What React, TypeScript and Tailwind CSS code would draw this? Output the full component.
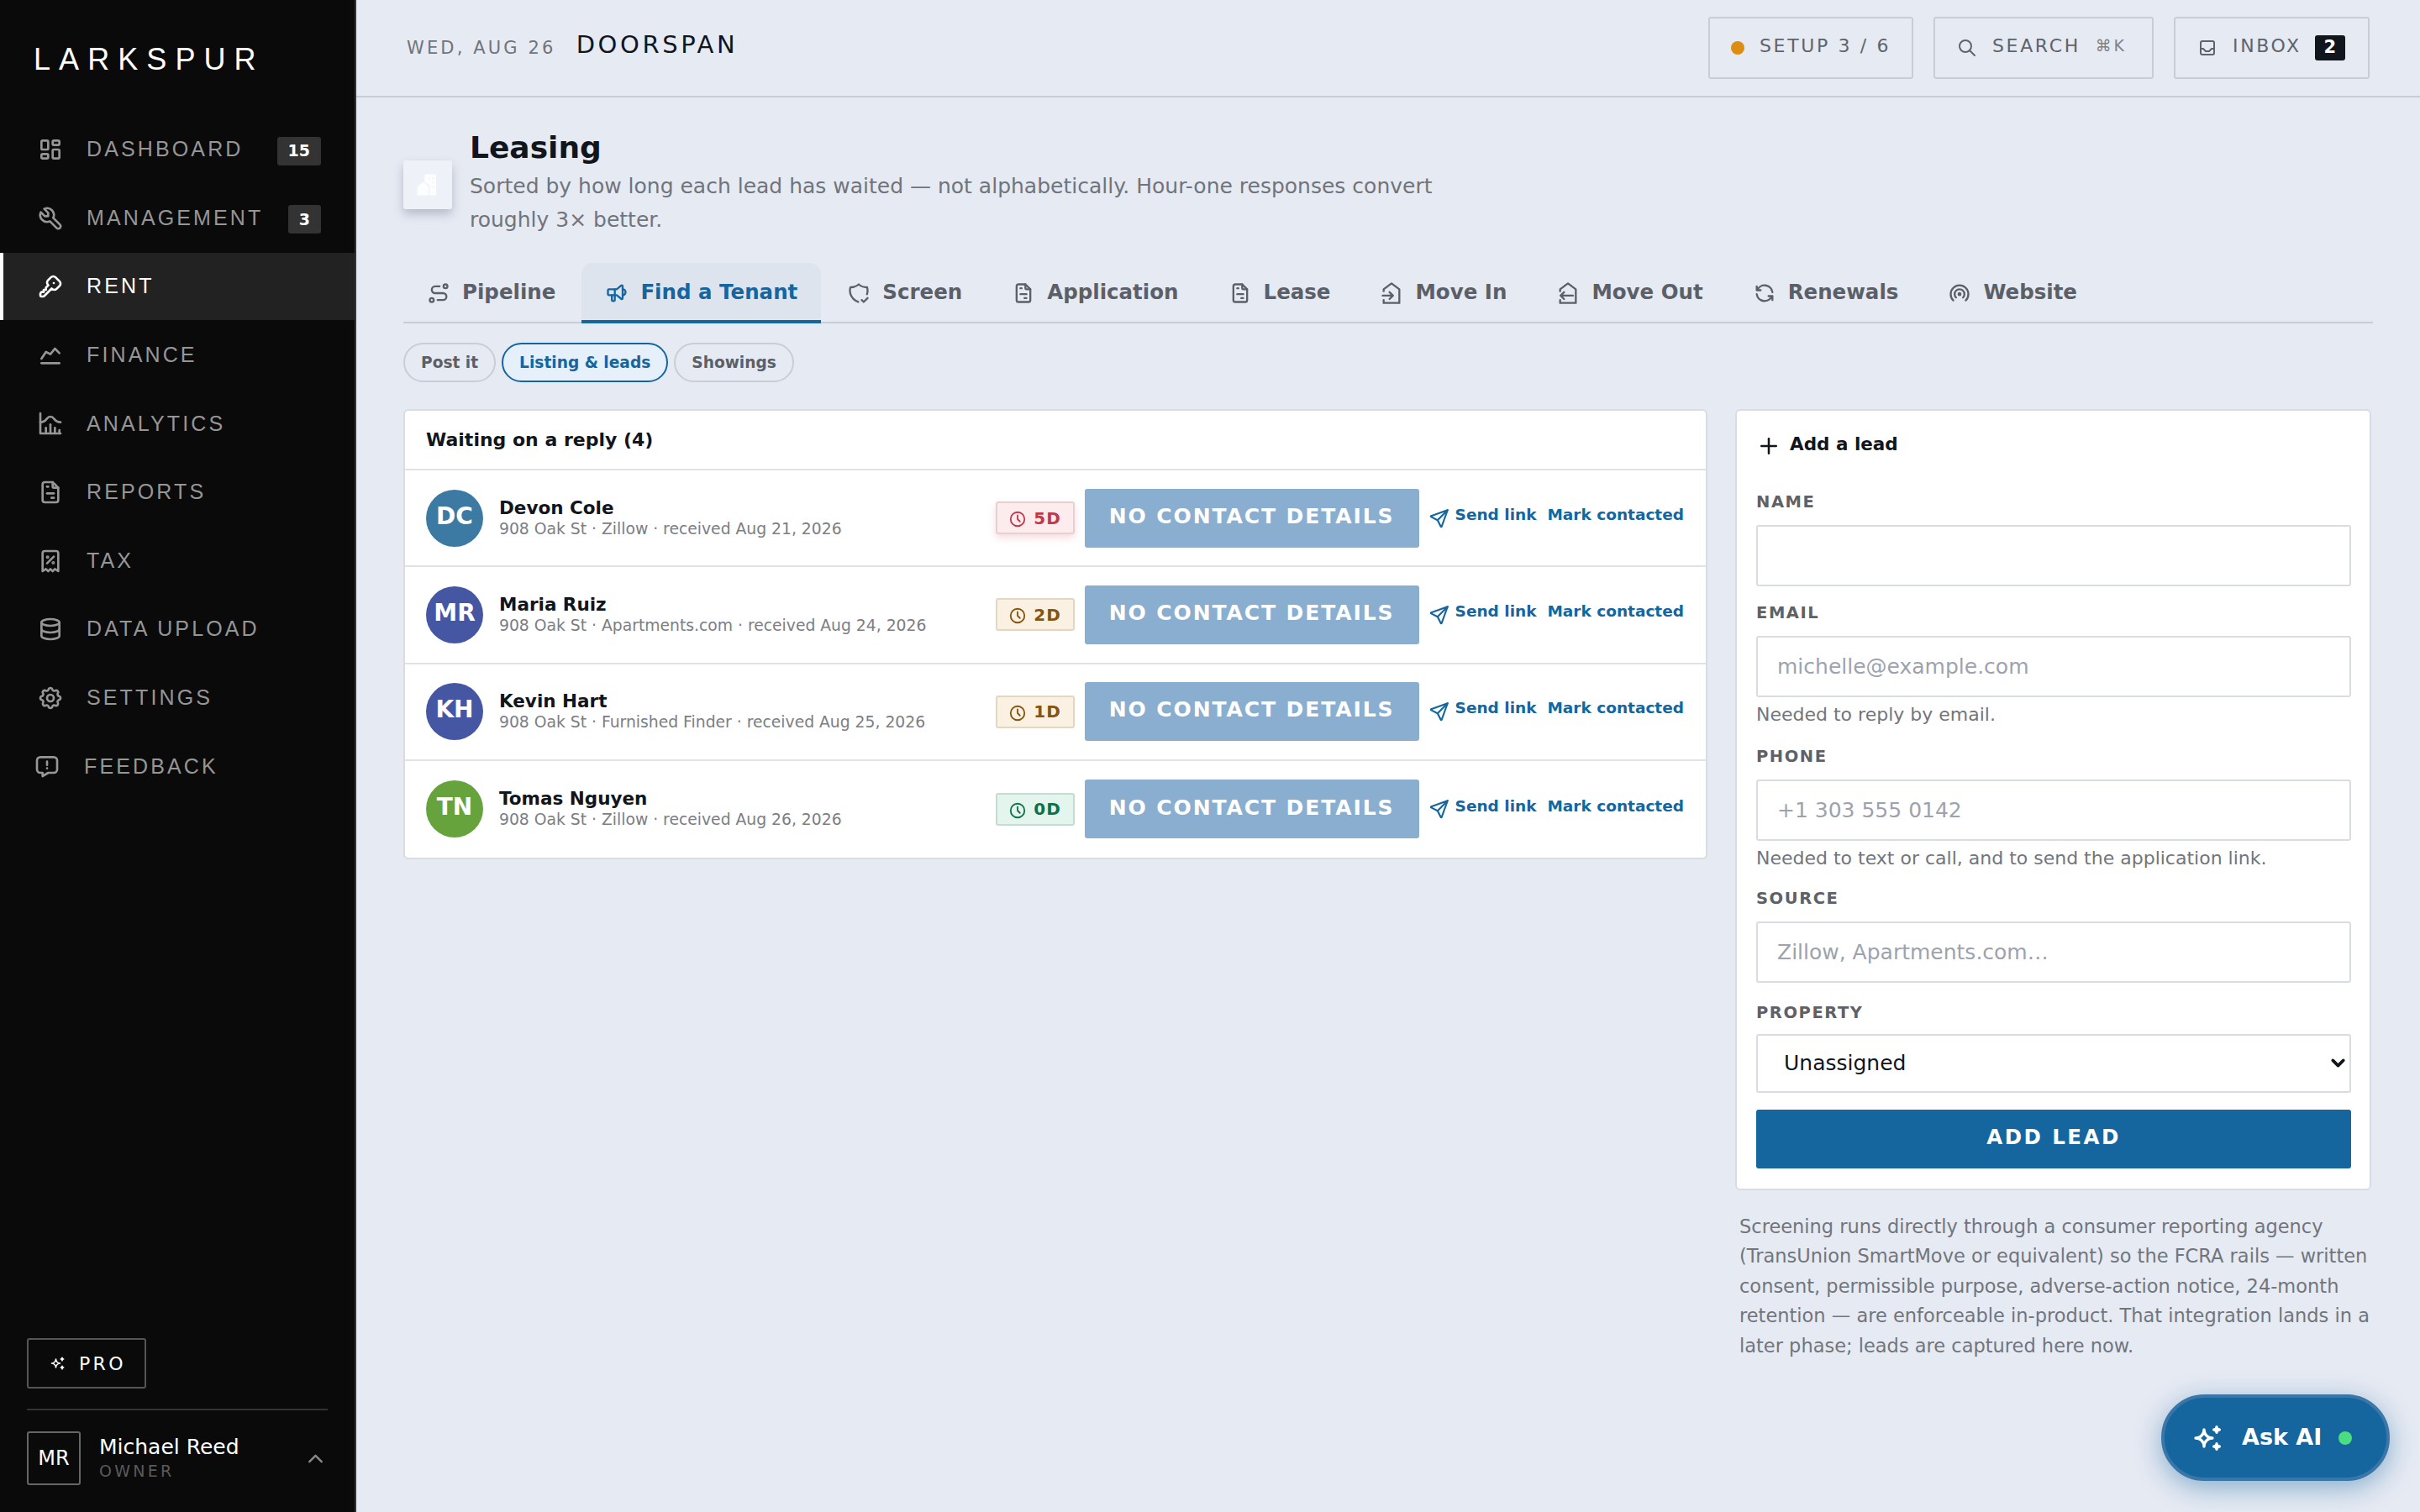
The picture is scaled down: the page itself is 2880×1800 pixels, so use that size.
import type { ReactNode } from "react";
import {
  TbBroadcast,
  TbChartHistogram,
  TbChartLine,
  TbChevronDown,
  TbChevronUp,
  TbClock,
  TbDatabase,
  TbFileInvoice,
  TbInbox,
  TbKey,
  TbLayoutDashboard,
  TbMessageReport,
  TbPlus,
  TbReceiptTax,
  TbRefresh,
  TbRoute,
  TbSearch,
  TbSend,
  TbSettings,
  TbShieldCheck,
  TbSparkles,
  TbSpeakerphone,
  TbTool,
} from "react-icons/tb";

function Svg({ className, children }: { className?: string; children: ReactNode }) {
  return (
    <svg
      viewBox="0 0 24 24"
      fill="none"
      stroke="currentColor"
      strokeWidth="2"
      strokeLinecap="round"
      strokeLinejoin="round"
      className={className}
    >
      {children}
    </svg>
  );
}

const MoveInIcon = ({ className }: { className?: string }) => (
  <Svg className={className}>
    <path d="M4 10V8l8-6 8 6v14H4v-3" />
    <path d="M3 14.5h10M10 11l3.5 3.5L10 18" />
  </Svg>
);

const MoveOutIcon = ({ className }: { className?: string }) => (
  <Svg className={className}>
    <path d="M4 10V8l8-6 8 6v14H4v-3" />
    <path d="M17 14.5H5M8 11l-3.5 3.5L8 18" />
  </Svg>
);

const nav = [
  { label: "DASHBOARD", icon: TbLayoutDashboard, badge: "15" },
  { label: "MANAGEMENT", icon: TbTool, badge: "3" },
  { label: "RENT", icon: TbKey, active: true },
  { label: "FINANCE", icon: TbChartLine },
  { label: "ANALYTICS", icon: TbChartHistogram },
  { label: "REPORTS", icon: TbFileInvoice },
  { label: "TAX", icon: TbReceiptTax },
  { label: "DATA UPLOAD", icon: TbDatabase },
  { label: "SETTINGS", icon: TbSettings },
];

const tabs = [
  { label: "Pipeline", icon: TbRoute },
  { label: "Find a Tenant", icon: TbSpeakerphone, active: true },
  { label: "Screen", icon: TbShieldCheck },
  { label: "Application", icon: TbFileInvoice },
  { label: "Lease", icon: TbFileInvoice },
  { label: "Move In", icon: MoveInIcon },
  { label: "Move Out", icon: MoveOutIcon },
  { label: "Renewals", icon: TbRefresh },
  { label: "Website", icon: TbBroadcast },
];

const leads = [
  {
    initials: "DC",
    name: "Devon Cole",
    meta: "908 Oak St · Zillow · received Aug 21, 2026",
    age: "5D",
    avatar: "bg-[#3d7aa3]",
    badge: "bg-[#fdecee] border-[#e8cfd2] text-[#c0394b] shadow-[0_4px_10px_rgba(192,57,75,0.18)]",
  },
  {
    initials: "MR",
    name: "Maria Ruiz",
    meta: "908 Oak St · Apartments.com · received Aug 24, 2026",
    age: "2D",
    avatar: "bg-[#4556a3]",
    badge: "bg-[#fbf1e2] border-[#e3d6c2] text-[#85540f]",
  },
  {
    initials: "KH",
    name: "Kevin Hart",
    meta: "908 Oak St · Furnished Finder · received Aug 25, 2026",
    age: "1D",
    avatar: "bg-[#4556a3]",
    badge: "bg-[#fbf1e2] border-[#e3d6c2] text-[#85540f]",
  },
  {
    initials: "TN",
    name: "Tomas Nguyen",
    meta: "908 Oak St · Zillow · received Aug 26, 2026",
    age: "0D",
    avatar: "bg-[#66a33d]",
    badge: "bg-[#e4f5ee] border-[#c4dcd1] text-[#0f7148]",
  },
];

function Field({ label, placeholder, hint, hintClass }: { label: string; placeholder?: string; hint?: string; hintClass?: string }) {
  return (
    <div className="flex flex-col">
      <label className="mb-[15px] h-[24px] text-[19.5px] leading-[24px] font-bold tracking-[0.08em] text-[#5f6167]">{label}</label>
      <input
        placeholder={placeholder}
        className="h-[73px] w-full rounded-[3px] border-2 border-[#d9dce3] bg-white px-[23px] text-[25px] placeholder:text-[#9ca3af]"
      />
      {hint && <p className={`mt-[7px] h-[28px] text-[22px] leading-[28px] text-[#71757c] ${hintClass}`}>{hint}</p>}
    </div>
  );
}

export default function App() {
  return (
    <div className="relative flex h-[1800px] w-[2880px] overflow-hidden bg-[#e6eaf3] font-['DejaVu_Sans',sans-serif] text-[#11151c]">
      <aside className="flex w-[424px] shrink-0 flex-col border-r-2 border-[#333] bg-[#0a0a0a]">
        <div className="flex h-[138px] items-start pl-[40px] pt-[49px] font-['Liberation_Sans',sans-serif] text-[36px] leading-[44px] tracking-[0.28em] text-white">
          LARKSPUR
        </div>
        <nav className="flex flex-col gap-[1.6px]">
          {nav.map((item) => (
            <div
              key={item.label}
              className={`flex h-[80px] items-center gap-[27px] border-l-4 pl-[40px] pr-[40px] ${
                item.active ? "border-white bg-[#222] text-white" : "border-transparent text-[#969696]"
              }`}
            >
              <item.icon className="h-[32px] w-[32px] shrink-0" />
              <span className="font-['Liberation_Sans',sans-serif] text-[25px] tracking-[0.125em]">{item.label}</span>
              {item.badge && (
                <span className="ml-auto mt-[3px] flex h-[34px] items-center rounded-[3px] bg-[#333] px-[13px] text-[19px] font-bold text-white">
                  {item.badge}
                </span>
              )}
            </div>
          ))}
          <div className="flex h-[80px] items-center gap-[28px] pl-[40px] text-[#969696]">
            <TbMessageReport className="h-[32px] w-[32px] shrink-0" />
            <span className="font-['Liberation_Sans',sans-serif] text-[25px] tracking-[0.125em]">FEEDBACK</span>
          </div>
        </nav>
        <div className="mt-auto flex flex-col px-[32px] pb-[32px]">
          <button className="flex h-[60px] w-[142px] items-center gap-[15px] rounded-[3px] border-2 border-[#555] pl-[25px] text-[22px] tracking-[0.15em] text-white">
            <TbSparkles className="h-[20px] w-[20px]" />
            PRO
          </button>
          <div className="mt-[24px] flex items-center gap-[22px] border-t-2 border-[#333] pt-[25px]">
            <div className="flex h-[64px] w-[64px] items-center justify-center rounded-[3px] border-2 border-[#666] text-[24px] text-white">
              MR
            </div>
            <div className="mb-[3px] flex flex-col">
              <span className="text-[25px] leading-[32px] text-white">Michael Reed</span>
              <span className="text-[19px] leading-[24px] tracking-[0.17em] text-[#5a5a5a]">OWNER</span>
            </div>
            <TbChevronUp className="ml-auto h-[29px] w-[29px] text-[#888]" />
          </div>
        </div>
      </aside>

      <main className="flex min-w-0 flex-1 flex-col">
        <header className="flex h-[116px] shrink-0 items-start justify-between border-b-2 border-[#c9cdd8] pl-[60px] pr-[60px] pt-[20px]">
          <div className="flex h-[68px] items-center gap-[24px]">
            <span className="mt-[8px] text-[21px] tracking-[0.15em] text-[#70747b]">WED, AUG 26</span>
            <span className="text-[29px] tracking-[0.125em] text-[#11151c]">DOORSPAN</span>
          </div>
          <div className="flex items-center gap-[24px] text-[22px] tracking-[0.12em] text-[#5f636b]">
            <div className="flex h-[74px] w-[244px] items-center gap-[18px] rounded-[3px] border-2 border-[#c9cdd8] pl-[25px]">
              <span className="h-[16px] w-[16px] rounded-full bg-[#dd8d12]" />
              <span className="mb-[5px]">SETUP 3 / 6</span>
            </div>
            <div className="flex h-[74px] w-[262px] items-center gap-[18px] rounded-[3px] border-2 border-[#c9cdd8] pl-[26px]">
              <TbSearch className="h-[24px] w-[24px]" />
              <span className="mb-[5px]">SEARCH</span>
              <span className="mb-[5px] text-[19px] text-[#7e828a]">⌘K</span>
            </div>
            <div className="flex h-[74px] w-[233px] items-center gap-[18px] rounded-[3px] border-2 border-[#c9cdd8] pl-[26px]">
              <TbInbox className="h-[24px] w-[24px]" />
              <span className="mb-[5px]">INBOX</span>
              <span className="ml-[-2px] flex h-[30px] w-[36px] items-center justify-center rounded-[3px] bg-[#11151c] text-[21px] font-bold tracking-normal text-white">
                2
              </span>
            </div>
          </div>
        </header>

        <div className="flex flex-col pl-[56px] pr-[56px]">
          <div className="flex items-start gap-[21px] pt-[38px]">
            <div className="mt-[37px] flex h-[58px] w-[58px] items-center justify-center rounded-[3px] bg-[#eef1f7] shadow-[0_6px_12px_rgba(90,100,130,0.35)]">
              <svg viewBox="0 0 24 24" className="h-[30px] w-[30px] text-white/85" fill="currentColor">
                <path d="M9 2h11v20H14v-9L9 9V2Z" />
                <path d="M2 14l6-5 5 5v8H2v-8Z" />
                <path d="M13 5h1.5v1.5H13ZM16.5 5H18v1.5h-1.5ZM16.5 9H18v1.5h-1.5ZM16.5 13H18v1.5h-1.5Z" fill="#eef1f7" />
              </svg>
            </div>
            <div className="flex flex-col">
              <h1 className="text-[36px] leading-[44px] font-bold">Leasing</h1>
              <p className="mt-[4px] w-[1180px] text-[25px] leading-[40px] text-[#70747b]">
                Sorted by how long each lead has waited — not alphabetically. Hour-one responses convert roughly 3× better.
              </p>
            </div>
          </div>

          <div className="mt-[31px] flex h-[72px] gap-[3px] border-b-2 border-[#c9cdd8]">
            {tabs.map((tab) => (
              <div
                key={tab.label}
                className={`flex h-[72px] items-center gap-[14px] rounded-t-[14px] border-b-4 px-[28px] pt-[2px] text-[24.5px] font-bold ${
                  tab.active ? "border-[#15659e] bg-[#dde4ee] text-[#15659e]" : "border-transparent text-[#5b5f68]"
                }`}
              >
                <tab.icon className="mt-[2px] h-[28px] w-[28px] shrink-0" />
                {tab.label}
              </div>
            ))}
          </div>

          <div className="mt-[23px] flex gap-[7px]">
            <span className="flex h-[47px] items-center rounded-full border-2 border-[#c9cdd8] px-[19px] text-[18.6px] font-bold text-[#5b5f68]">Post it</span>
            <span className="flex h-[47px] items-center rounded-full border-2 border-[#15659e] bg-[#e6f0fb] px-[19px] text-[18.6px] font-bold text-[#15659e]">Listing &amp; leads</span>
            <span className="flex h-[47px] items-center rounded-full border-2 border-[#c9cdd8] px-[19px] text-[18.6px] font-bold text-[#5b5f68]">Showings</span>
          </div>

          <div className="mt-[32px] flex items-start gap-[33px]">
            <section className="w-[1552px] shrink-0 rounded-[6px] border-2 border-[#d9dce3] bg-white">
              <div className="flex h-[71px] items-center border-b-2 border-[#e0e2e6] pl-[25px] text-[22px] font-bold">
                Waiting on a reply (4)
              </div>
              {leads.map((lead, i) => (
                <div
                  key={lead.name}
                  className={`flex h-[115.25px] items-center pl-[25px] pr-[26px] ${i < leads.length - 1 ? "border-b-2 border-[#e0e2e6]" : ""}`}
                >
                  <div className={`flex h-[68px] w-[68px] shrink-0 items-center justify-center rounded-full pb-[4px] text-[28px] font-bold text-white ${lead.avatar}`}>
                    {lead.initials}
                  </div>
                  <div className="ml-[19px] flex flex-col">
                    <span className="text-[21.5px] leading-[26px] font-bold">{lead.name}</span>
                    <span className="text-[18.75px] leading-[24px] text-[#7b7e85]">{lead.meta}</span>
                  </div>
                  <span className={`ml-auto flex h-[39px] w-[94px] items-center justify-center gap-[8px] rounded-[3px] border-2 text-[20px] font-bold tracking-[0.05em] ${lead.badge}`}>
                    <TbClock className="mt-[3px] h-[22px] w-[22px]" />
                    {lead.age}
                  </span>
                  <button className="ml-[12px] h-[70px] w-[398px] rounded-[3px] bg-[#89aecf] pb-[4px] text-[25px] font-bold tracking-[0.076em] text-white">
                    NO CONTACT DETAILS
                  </button>
                  <TbSend className="ml-[11px] h-[26px] w-[26px] text-[#15659e]" />
                  <span className="mb-[8px] ml-[6px] text-[18.5px] font-bold text-[#15659e]">Send link</span>
                  <span className="mb-[8px] ml-[13px] text-[18.5px] font-bold text-[#15659e]">Mark contacted</span>
                </div>
              ))}
            </section>

            <div className="flex w-[757px] shrink-0 flex-col">
              <section className="flex flex-col rounded-[6px] border-2 border-[#d9dce3] bg-white pb-[24px] pl-[23px] pr-[22px]">
                <div className="flex h-[78px] items-center gap-[10px] pt-[3px] text-[21.5px] font-bold">
                  <TbPlus className="mt-[2px] h-[30px] w-[30px]" />
                  Add a lead
                </div>
                <div className="mt-[19px] flex flex-col gap-[20px]">
                  <Field label="NAME" />
                  <Field label="EMAIL" placeholder="michelle@example.com" hint="Needed to reply by email." hintClass="mb-[4px]" />
                  <Field label="PHONE" placeholder="+1 303 555 0142" hint="Needed to text or call, and to send the application link." hintClass="mb-[2px]" />
                  <Field label="SOURCE" placeholder="Zillow, Apartments.com…" />
                  <div className="mt-[4px] flex flex-col">
                    <label className="mb-[13px] h-[24px] text-[19.5px] leading-[24px] font-bold tracking-[0.08em] text-[#5f6167]">PROPERTY</label>
                    <div className="relative">
                      <select className="h-[70px] w-full appearance-none rounded-[3px] border-2 border-[#d9dce3] bg-white pl-[31px] text-[25px]">
                        <option>Unassigned</option>
                      </select>
                      <TbChevronDown className="pointer-events-none absolute right-[3px] top-[22px] h-[25px] w-[25px] stroke-[3.5]" />
                    </div>
                  </div>
                </div>
                <button className="mt-[20px] h-[70px] w-full rounded-[3px] bg-[#15659e] pb-[3px] text-[24.5px] font-bold tracking-[0.1em] text-white">
                  ADD LEAD
                </button>
              </section>
              <p className="mt-[26px] pl-[5px] text-[22.5px] leading-[35.4px] text-[#71757c]">
                Screening runs directly through a consumer reporting agency (TransUnion SmartMove or equivalent) so the FCRA rails — written consent, permissible purpose, adverse-action notice, 24-month retention — are enforceable in-product. That integration lands in a later phase; leads are captured here now.
              </p>
            </div>
          </div>
        </div>
      </main>

      <button className="absolute bottom-[37px] right-[36px] flex h-[103px] w-[272px] items-center gap-[20px] rounded-full border-4 border-[#3a76a8] bg-[#15659e] pl-[32px] text-[27px] font-bold text-white shadow-[0_8px_32px_rgba(21,101,158,0.45)]">
        <TbSparkles className="h-[40px] w-[40px]" />
        Ask AI
        <span className="h-[16px] w-[16px] rounded-full bg-[#4ade80]" />
      </button>
    </div>
  );
}
